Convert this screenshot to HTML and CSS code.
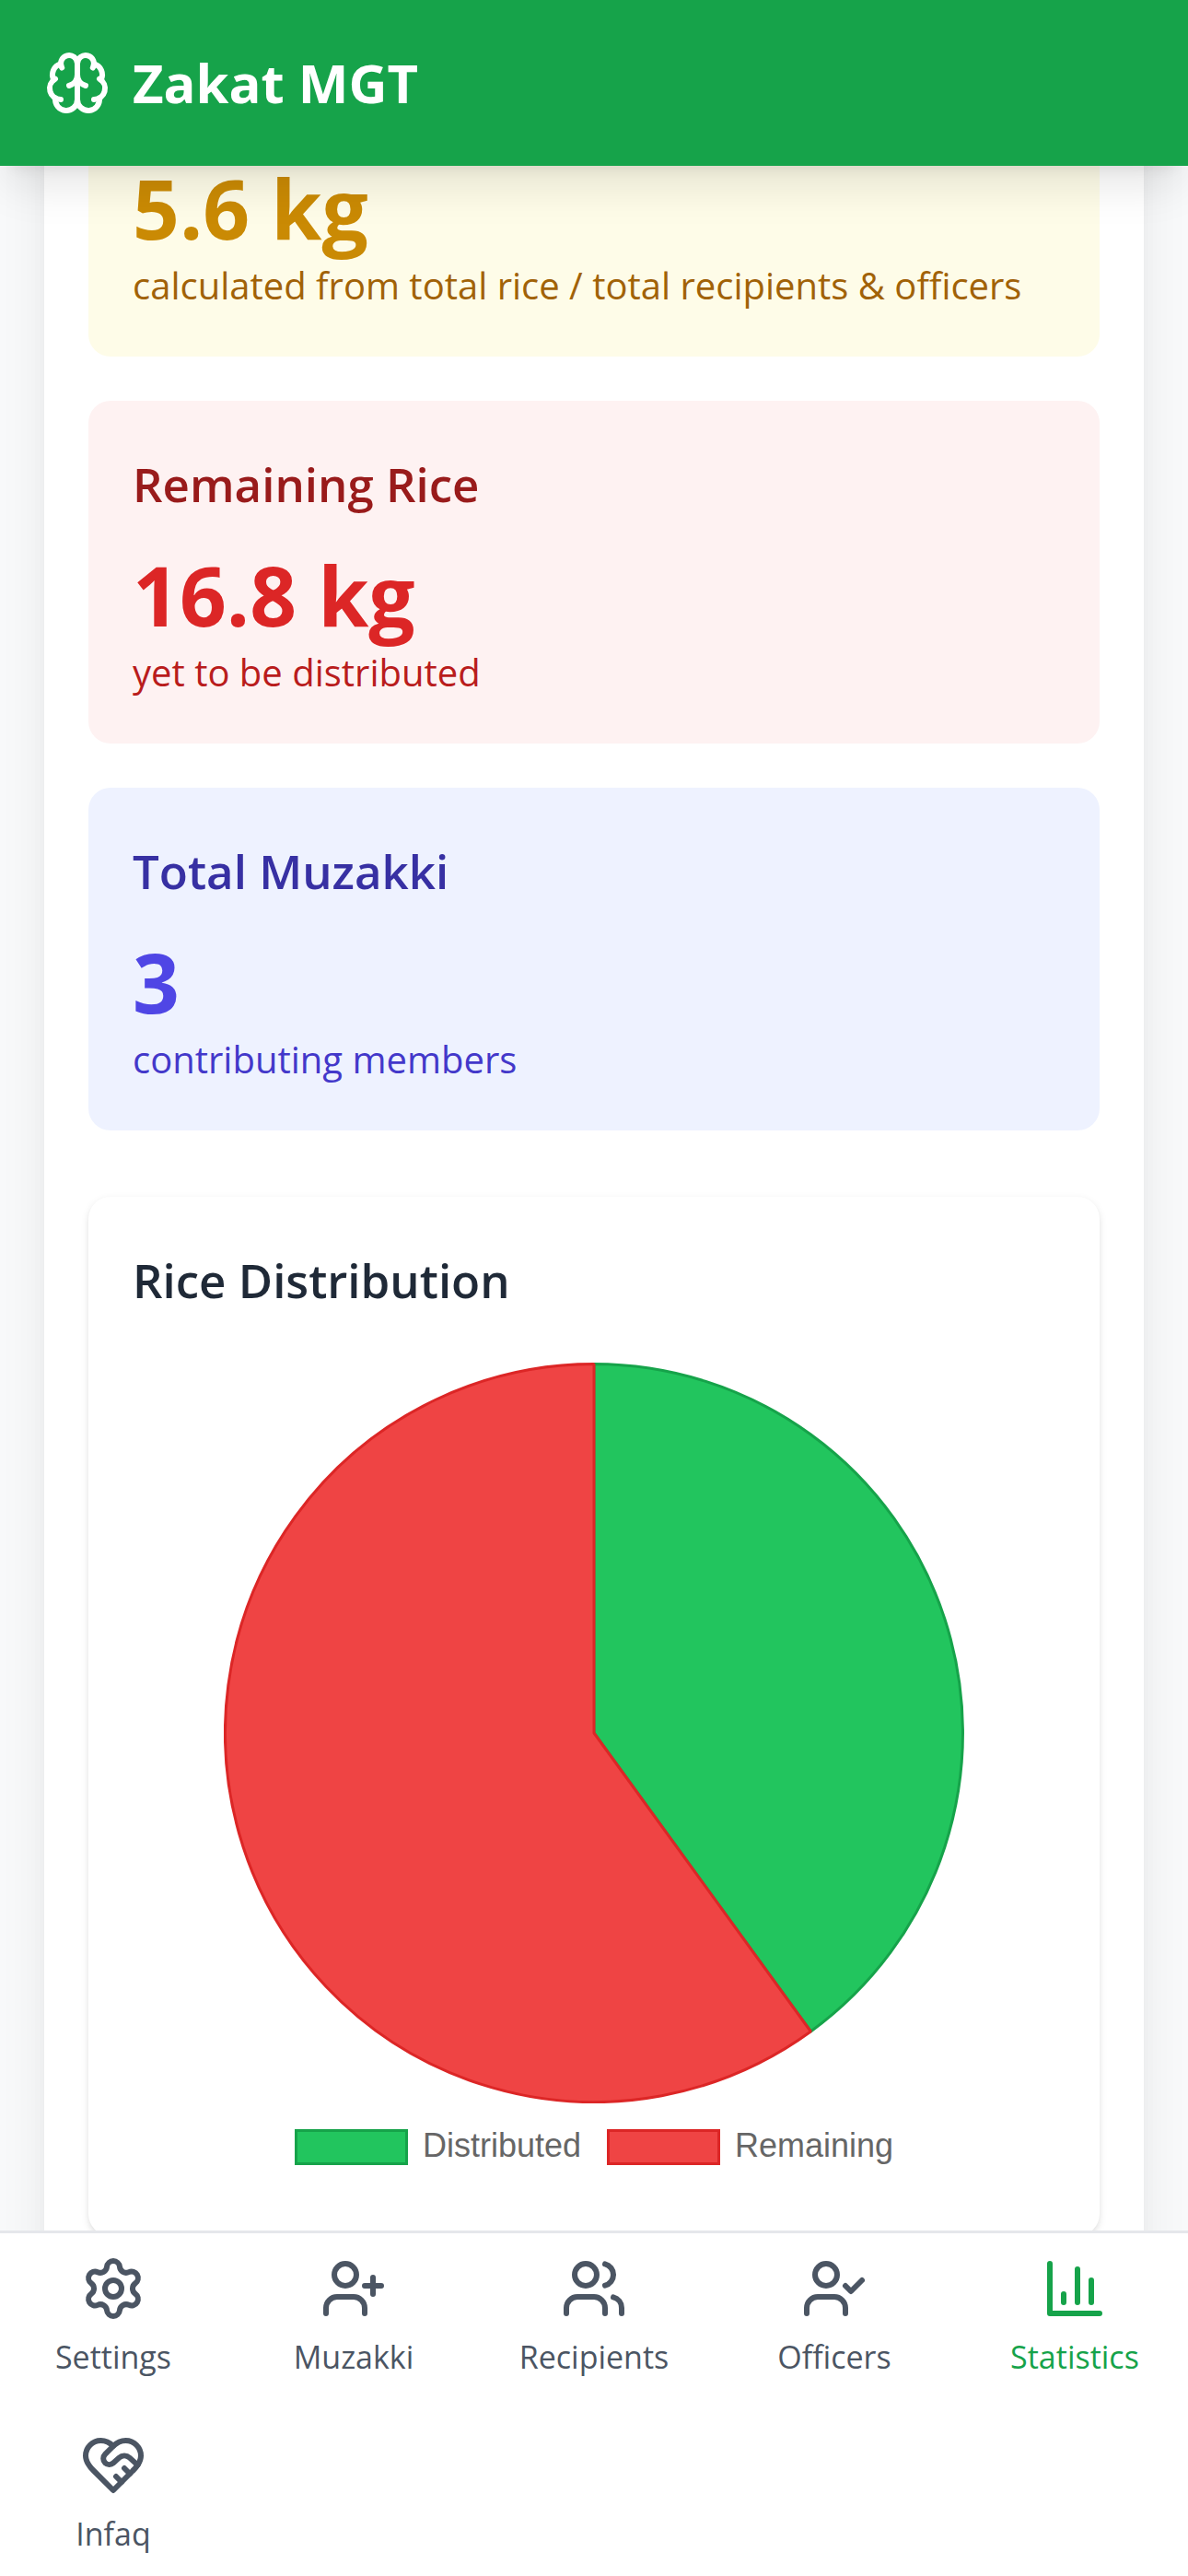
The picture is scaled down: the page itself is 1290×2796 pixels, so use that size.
FILE: index.html
```html
<!DOCTYPE html>
<html lang="en">
<head>
    <meta charset="UTF-8">
    <meta name="viewport" content="width=device-width, initial-scale=1"/>
    <title>Zakat MGT</title>
    <link rel="stylesheet" href="styles.css">
</head>
<body>
<header class="topbar">
    <svg class="icon" viewBox="0 0 24 24" aria-hidden="true">
        <path d="M12 18V5"/>
        <path d="M15 13a4.17 4.17 0 0 1-3-4 4.17 4.17 0 0 1-3 4"/>
        <path d="M17.598 6.5A3 3 0 1 0 12 5a3 3 0 1 0-5.598 1.5"/>
        <path d="M17.997 5.125a4 4 0 0 1 2.526 5.77"/>
        <path d="M18 18a4 4 0 0 0 2-7.464"/>
        <path d="M19.967 17.483A4 4 0 1 1 12 18a4 4 0 1 1-7.967-.517"/>
        <path d="M6 18a4 4 0 0 1-2-7.464"/>
        <path d="M6.003 5.125a4 4 0 0 0-2.526 5.77"/>
    </svg>
    <h1>Zakat MGT</h1>
</header>
<main>
    <div class="stats">
        <section class="card yellow">
            <p class="value">5.6 kg</p>
            <p class="note">calculated from total rice / total recipients &amp; officers</p>
        </section>
        <section class="card red">
            <h2>Remaining Rice</h2>
            <p class="value">16.8 kg</p>
            <p class="note">yet to be distributed</p>
        </section>
        <section class="card indigo">
            <h2>Total Muzakki</h2>
            <p class="value">3</p>
            <p class="note">contributing members</p>
        </section>
    </div>
    <section class="card chart-card">
        <h2>Rice Distribution</h2>
        <div class="chart">
            <svg class="pie" viewBox="-402 -402 804 804" role="img" aria-label="Rice Distribution">
                <path class="distributed" d="M0 0V-400.5A400.5 400.5 0 0 1 235.4 324Z"/>
                <path class="remaining" d="M0 0L235.4 324A400.5 400.5 0 1 1 0 -400.5Z"/>
            </svg>
            <ul class="legend">
                <li><span class="swatch distributed"></span>Distributed</li>
                <li><span class="swatch remaining"></span>Remaining</li>
            </ul>
        </div>
    </section>
</main>
<nav>
    <a href="#settings">
        <svg class="icon" viewBox="0 0 24 24" aria-hidden="true">
            <path d="M9.671 4.136a2.34 2.34 0 0 1 4.659 0 2.34 2.34 0 0 0 3.319 1.915 2.34 2.34 0 0 1 2.33 4.033 2.34 2.34 0 0 0 0 3.831 2.34 2.34 0 0 1-2.33 4.033 2.34 2.34 0 0 0-3.319 1.915 2.34 2.34 0 0 1-4.659 0 2.34 2.34 0 0 0-3.32-1.915 2.34 2.34 0 0 1-2.33-4.033 2.34 2.34 0 0 0 0-3.831A2.34 2.34 0 0 1 6.35 6.051a2.34 2.34 0 0 0 3.319-1.915"/>
            <circle cx="12" cy="12" r="3"/>
        </svg>
        Settings
    </a>
    <a href="#muzakki">
        <svg class="icon" viewBox="0 0 24 24" aria-hidden="true">
            <path d="M16 21v-2a4 4 0 0 0-4-4H6a4 4 0 0 0-4 4v2"/>
            <circle cx="9" cy="7" r="4"/>
            <path d="M19 8v6M22 11h-6"/>
        </svg>
        Muzakki
    </a>
    <a href="#recipients">
        <svg class="icon" viewBox="0 0 24 24" aria-hidden="true">
            <path d="M16 21v-2a4 4 0 0 0-4-4H6a4 4 0 0 0-4 4v2"/>
            <circle cx="9" cy="7" r="4"/>
            <path d="M22 21v-2a4 4 0 0 0-3-3.87"/>
            <path d="M16 3.13a4 4 0 0 1 0 7.75"/>
        </svg>
        Recipients
    </a>
    <a href="#officers">
        <svg class="icon" viewBox="0 0 24 24" aria-hidden="true">
            <path d="M16 21v-2a4 4 0 0 0-4-4H6a4 4 0 0 0-4 4v2"/>
            <circle cx="9" cy="7" r="4"/>
            <path d="M16 11l2 2 4-4"/>
        </svg>
        Officers
    </a>
    <a href="#statistics" class="active" aria-current="page">
        <svg class="icon" viewBox="0 0 24 24" aria-hidden="true">
            <path d="M3 3v18h18"/>
            <path d="M18 17V9M13 17V5M8 17v-3"/>
        </svg>
        Statistics
    </a>
    <a href="#infaq">
        <svg class="icon" viewBox="0 0 24 24" aria-hidden="true">
            <path d="M19 14c1.49-1.46 3-3.21 3-5.5A5.5 5.5 0 0 0 16.5 3c-1.76 0-3 .5-4.5 2-1.5-1.5-2.74-2-4.5-2A5.5 5.5 0 0 0 2 8.5c0 2.3 1.5 4.05 3 5.5l7 7Z"/>
            <path d="M12 5 9.04 7.96a2.17 2.17 0 0 0 0 3.08c.82.82 2.13.85 3 .07l2.07-1.9a2.82 2.82 0 0 1 3.79 0l2.96 2.66"/>
            <path d="M18 15l-2-2M15 18l-2-2"/>
        </svg>
        Infaq
    </a>
</nav>
</body>
</html>
```
FILE: styles.css
```css
* {
    box-sizing: border-box;
    margin: 0;
    padding: 0;
}

body {
    min-height: 100vh;
    background-color: #f9fafb;
    font-family: "Segoe UI", "Open Sans", "Noto Sans", sans-serif;
}

.icon {
    width: 72px;
    height: 72px;
    fill: none;
    stroke: currentColor;
    stroke-width: 2;
    stroke-linecap: round;
    stroke-linejoin: round;
}

.topbar {
    position: fixed;
    top: 0;
    left: 0;
    right: 0;
    z-index: 1;
    display: flex;
    align-items: center;
    gap: 24px;
    height: 180px;
    padding: 0 48px;
    background-color: #16a34a;
    color: white;
    box-shadow: 0 30px 45px -9px rgba(0, 0, 0, 0.1), 0 12px 18px -12px rgba(0, 0, 0, 0.1);
}

h1 {
    font-size: 58px;
    line-height: 84px;
    font-weight: bold;
}

main {
    margin: 0 48px;
    padding: 0 48px 48px;
    background-color: white;
    box-shadow: 0 60px 75px -15px rgba(0, 0, 0, 0.1), 0 24px 30px -18px rgba(0, 0, 0, 0.1);
}

.stats {
    display: grid;
    gap: 48px;
    margin-bottom: 72px;
}

.card {
    padding: 48px;
    border-radius: 24px;
}

h2 {
    margin-bottom: 24px;
    font-size: 51px;
    line-height: 84px;
    font-weight: 600;
}

.value {
    font-size: 89px;
    line-height: 110px;
    font-weight: bold;
}

.note {
    font-size: 40px;
    line-height: 58px;
}

/* its upper part slides under the top bar */
.yellow {
    padding-top: 171px;
    background-color: #fefce8;
}

.yellow .value {
    color: #ca8a04;
}

.yellow .note {
    color: #a16207;
}

.red {
    background-color: #fef2f2;
}

.red h2 {
    color: #991b1b;
}

.red .value {
    color: #dc2626;
}

.red .note {
    color: #b91c1c;
}

.indigo {
    background-color: #eef2ff;
}

.indigo h2 {
    color: #3730a3;
}

.indigo .value {
    color: #4f46e5;
}

.indigo .note {
    color: #4338ca;
}

.chart-card {
    background-color: white;
    box-shadow: 0 3px 9px 0 rgba(0, 0, 0, 0.1), 0 3px 6px -3px rgba(0, 0, 0, 0.1);
}

.chart-card h2 {
    margin-bottom: 48px;
    color: #1f2937;
}

.chart {
    display: flex;
    flex-direction: column;
    align-items: center;
    height: 900px;
}

.pie {
    width: 804px;
    max-width: 100%;
}

.pie path {
    stroke-width: 3;
    stroke-linejoin: bevel;
}

.legend {
    display: flex;
    gap: 28px;
    margin-top: 28px;
    list-style: none;
    font-family: "Liberation Sans", Arial, sans-serif;
    font-size: 36px;
    line-height: 36px;
    color: #666;
}

.legend li {
    display: flex;
    gap: 16px;
}

.swatch {
    width: 123px;
    height: 39px;
    border: 3px solid;
}

.distributed {
    fill: #22c55e;
    stroke: #16a34a;
    background-color: #22c55e;
    border-color: #16a34a;
}

.remaining {
    fill: #ef4444;
    stroke: #dc2626;
    background-color: #ef4444;
    border-color: #dc2626;
}

nav {
    position: fixed;
    bottom: 0;
    left: 0;
    right: 0;
    z-index: 1;
    display: grid;
    grid-template-columns: repeat(5, 1fr);
    gap: 12px 15px;
    border-top: 3px solid #e5e7eb;
    background-color: white;
}

nav a {
    display: flex;
    flex-direction: column;
    align-items: center;
    gap: 14px;
    padding: 24px 0 22px;
    font-size: 34px;
    line-height: 48px;
    color: #4b5563;
    text-decoration: none;
}

nav a.active {
    color: #16a34a;
}
```
